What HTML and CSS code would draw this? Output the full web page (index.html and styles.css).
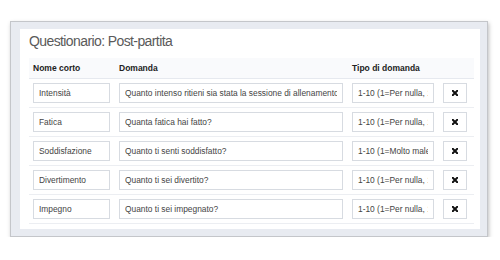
FILE: index.html
```html
<!DOCTYPE html>
<html lang="it">
<head>
  <meta charset="UTF-8">
  <meta name="viewport" content="width=device-width, initial-scale=1.0">
  <link rel="stylesheet" href="styles.css">
</head>
<body>
<div class="frame">
  <div class="panel">
    <div class="title">Questionario: Post-partita</div>
    <table class="questions">
      <colgroup>
        <col class="col-name">
        <col class="col-question">
        <col class="col-type">
        <col class="col-action">
      </colgroup>
      <thead>
        <tr>
          <th>Nome corto</th>
          <th>Domanda</th>
          <th>Tipo di domanda</th>
          <th></th>
        </tr>
      </thead>
      <tbody>
        <tr>
          <td><input type="text" class="field" value="Intensità"></td>
          <td><input type="text" class="field" value="Quanto intenso ritieni sia stata la sessione di allenamento/partita?"></td>
          <td><input type="text" class="field" value="1-10 (1=Per nulla, 10=Massimo)"></td>
          <td><button class="remove"><svg viewBox="0 0 8 8" width="6" height="6"><path d="M1 1L7 7M7 1L1 7" stroke="#111" stroke-width="2.6" stroke-linecap="square"/></svg></button></td>
        </tr>
        <tr>
          <td><input type="text" class="field" value="Fatica"></td>
          <td><input type="text" class="field" value="Quanta fatica hai fatto?"></td>
          <td><input type="text" class="field" value="1-10 (1=Per nulla, 10=Massimo)"></td>
          <td><button class="remove"><svg viewBox="0 0 8 8" width="6" height="6"><path d="M1 1L7 7M7 1L1 7" stroke="#111" stroke-width="2.6" stroke-linecap="square"/></svg></button></td>
        </tr>
        <tr>
          <td><input type="text" class="field" value="Soddisfazione"></td>
          <td><input type="text" class="field" value="Quanto ti senti soddisfatto?"></td>
          <td><input type="text" class="field" value="1-10 (1=Molto male, 10=Molto bene)"></td>
          <td><button class="remove"><svg viewBox="0 0 8 8" width="6" height="6"><path d="M1 1L7 7M7 1L1 7" stroke="#111" stroke-width="2.6" stroke-linecap="square"/></svg></button></td>
        </tr>
        <tr>
          <td><input type="text" class="field" value="Divertimento"></td>
          <td><input type="text" class="field" value="Quanto ti sei divertito?"></td>
          <td><input type="text" class="field" value="1-10 (1=Per nulla, 10=Massimo)"></td>
          <td><button class="remove"><svg viewBox="0 0 8 8" width="6" height="6"><path d="M1 1L7 7M7 1L1 7" stroke="#111" stroke-width="2.6" stroke-linecap="square"/></svg></button></td>
        </tr>
        <tr>
          <td><input type="text" class="field" value="Impegno"></td>
          <td><input type="text" class="field" value="Quanto ti sei impegnato?"></td>
          <td><input type="text" class="field" value="1-10 (1=Per nulla, 10=Massimo)"></td>
          <td><button class="remove"><svg viewBox="0 0 8 8" width="6" height="6"><path d="M1 1L7 7M7 1L1 7" stroke="#111" stroke-width="2.6" stroke-linecap="square"/></svg></button></td>
        </tr>
      </tbody>
    </table>
  </div>
</div>
</body>
</html>
```

FILE: styles.css
```css
body {
  margin: 0;
  background-color: #ffffff;
  font-family: "Liberation Sans", Arial, sans-serif;
}

.frame {
  box-sizing: border-box;
  width: 478px;
  height: 216px;
  margin: 21px 0 0 10px;
  padding: 7px 7px 6px 9px;
  background-color: #e8ebf1;
  border: 1px solid #c4c6ca;
  box-shadow: 1px 2px 4px rgba(0, 0, 0, 0.25);
}

.panel {
  box-sizing: border-box;
  width: 460px;
  height: 200px;
  padding-left: 9px;
  background-color: #ffffff;
}

.title {
  font-size: 14px;
  letter-spacing: -0.6px;
  line-height: 24px;
  color: #5a5a5a;
  margin-bottom: 5px;
}

.questions {
  width: 445px;
  table-layout: fixed;
  border-collapse: collapse;
}

.col-name {
  width: 86px;
}

.col-question {
  width: 233px;
}

.col-type {
  width: 91px;
}

.col-action {
  width: 35px;
}

.questions th {
  height: 20px;
  padding: 0 4px;
  text-align: left;
  font-size: 8.5px;
  font-weight: bold;
  color: #222;
  background-color: #f9fafc;
  border-bottom: 1px solid #e6e9ef;
}

.questions td {
  padding: 4px 5px 4px 4px;
  border-bottom: 1px solid #eceef2;
}

.field {
  box-sizing: border-box;
  display: block;
  width: 100%;
  height: 20px;
  margin: 0;
  padding: 0 5px;
  border: 1px solid #d7dbe1;
  border-radius: 0;
  background-color: #ffffff;
  font-family: "Liberation Sans", Arial, sans-serif;
  font-size: 8.4px;
  color: #444;
  outline: none;
}

.remove {
  box-sizing: border-box;
  display: flex;
  align-items: center;
  justify-content: center;
  width: 24px;
  height: 20px;
  margin: 0;
  padding: 0;
  border: 1px solid #d7dbe1;
  background-color: #ffffff;
  cursor: pointer;
}
```
